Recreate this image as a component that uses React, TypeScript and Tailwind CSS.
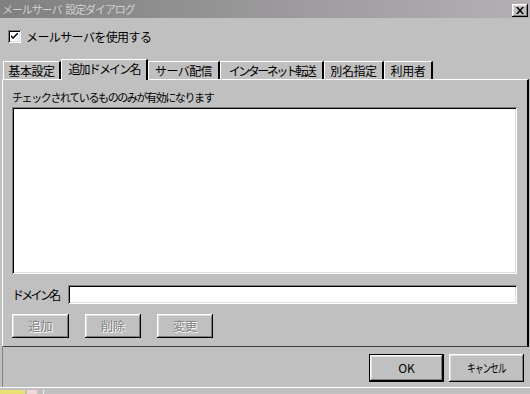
import React from "react";

const font = { fontFamily: '"Noto Sans CJK JP", "Liberation Sans", sans-serif' };

const raised =
  "shadow-[inset_-1px_-1px_0_#000,inset_1px_1px_0_#fff,inset_-2px_-2px_0_#808080,inset_2px_2px_0_#dfdfdf]";
const sunken =
  "shadow-[inset_1px_1px_0_#808080,inset_-1px_-1px_0_#fff,inset_2px_2px_0_#000,inset_-2px_-2px_0_#dfdfdf]";

const tabs = [
  { label: "基本設定", w: "w-[58px]", t: "tracking-[-0.4px]" },
  { label: "追加ドメイン名", w: "w-[87px]", t: "tracking-[-1.8px]", active: true },
  { label: "サーバ配信", w: "w-[72px]", t: "tracking-[-0.6px]" },
  { label: "インターネット転送", w: "w-[104px]", t: "tracking-[-2.5px]" },
  { label: "別名指定", w: "w-[60px]", t: "tracking-[-0.4px]" },
  { label: "利用者", w: "w-[49px]", t: "tracking-[-0.4px]" },
];

const DisabledButton = ({ label, w }: { label: string; w: string }) => (
  <div className={`${w} h-[24px] bg-[#c0c0c0] flex items-center justify-center ${raised}`}>
    <span className="text-[12px] text-[#808080] [text-shadow:1px_1px_0_#fff]">{label}</span>
  </div>
);

const App = () => {
  return (
    <div className="w-[530px] h-[394px] bg-[#c0c0c0] flex flex-col overflow-hidden text-black" style={font}>
      {/* title bar */}
      <div className="h-[18px] shrink-0 bg-gradient-to-r from-[#808080] via-[#9a989a] to-[#b4b0b4] flex items-center justify-between pl-[2px] pr-[2px]">
        <span className="text-[11px] leading-none tracking-[-1.1px] text-[#d0d0d0] whitespace-nowrap">
          メールサーバ<span className="inline-block w-[4px]" />設定ダイアログ
        </span>
        <div className={`w-[16px] h-[13px] bg-[#c0c0c0] flex items-center justify-center mt-[2px] ${raised}`}>
          <svg width="8" height="7" viewBox="0 0 8 7">
            <path d="M0 0h2l2 2.5L6 0h2L5 3.5 8 7H6L4 4.5 2 7H0l3-3.5z" fill="#000" />
          </svg>
        </div>
      </div>

      {/* checkbox row */}
      <div className="flex items-center pl-[8px] mt-[12px] h-[13px]">
        <div className={`w-[13px] h-[13px] bg-white flex items-center justify-center ${sunken}`}>
          <svg width="7" height="7" viewBox="0 0 7 7">
            <path d="M0 2v2l2 2 5-5V-1L2 4z" fill="#000" />
          </svg>
        </div>
        <span className="ml-[5px] text-[12px] tracking-[-0.6px] whitespace-nowrap">メールサーバを使用する</span>
      </div>

      {/* tabs */}
      <div className="flex items-end pl-[3px] mt-[16px] h-[20px]">
        {tabs.map((t) => (
          <div
            key={t.label}
            className={`${t.w} ${t.t} whitespace-nowrap flex items-center justify-center text-[12px] border-t border-l border-white border-r-2 border-r-black bg-[#c0c0c0] ${
              t.active ? "h-[21px] relative top-[1px] z-10 pb-[2px]" : "h-[18px]"
            }`}
          >
            {t.label}
          </div>
        ))}
      </div>

      {/* panel */}
      <div className="ml-[2px] w-[527px] h-[268px] border-t border-l border-white border-r-2 border-r-black border-b border-b-[#404040] flex flex-col pl-[9px]">
        <div className="mt-[9px] h-[16px] text-[11px] leading-[16px] tracking-[-1.4px] whitespace-nowrap">
          チェックされているもののみが有効になります
        </div>
        <div className={`mt-[2px] w-[505px] h-[167px] bg-white ${sunken}`} />
        <div className="mt-[11px] flex items-center h-[19px]">
          <span className="w-[56px] text-[12px] tracking-[-2.7px] whitespace-nowrap">ドメイン名</span>
          <div className={`w-[449px] h-[19px] bg-white ${sunken}`} />
        </div>
        <div className="mt-[10px] flex gap-[16px]">
          <DisabledButton label="追加" w="w-[57px]" />
          <DisabledButton label="削除" w="w-[56px]" />
          <DisabledButton label="変更" w="w-[56px]" />
        </div>
      </div>

      {/* lower button area */}
      <div className="h-[40px] shrink-0 ml-[2px] border-l border-[#808080] flex items-start justify-end pr-[6px] pt-[7px] gap-[5px]">
        <div className="w-[75px] h-[28px] border border-black">
          <div className={`w-full h-full flex items-center justify-center text-[12px] ${raised}`}>OK</div>
        </div>
        <div className={`w-[75px] h-[28px] flex items-center justify-center ${raised}`}>
          <span className="inline-block text-[12px] tracking-[-1px] whitespace-nowrap scale-x-[0.7]">キャンセル</span>
        </div>
      </div>

      {/* taskbar fragment */}
      <div className="flex-1 border-t border-white flex items-stretch pt-[2px]">
        <div className="w-[25px] bg-[#e8e070]" />
        <div className="w-[2px]" />
        <div className="w-[10px] bg-[#f0d8d8]" />
        <div className="w-[6px]" />
        <div className="w-[1px] bg-[#f0f0f0]" />
        <div className="flex-1 bg-[#c0c0c0]" />
      </div>
    </div>
  );
};

export default App;
